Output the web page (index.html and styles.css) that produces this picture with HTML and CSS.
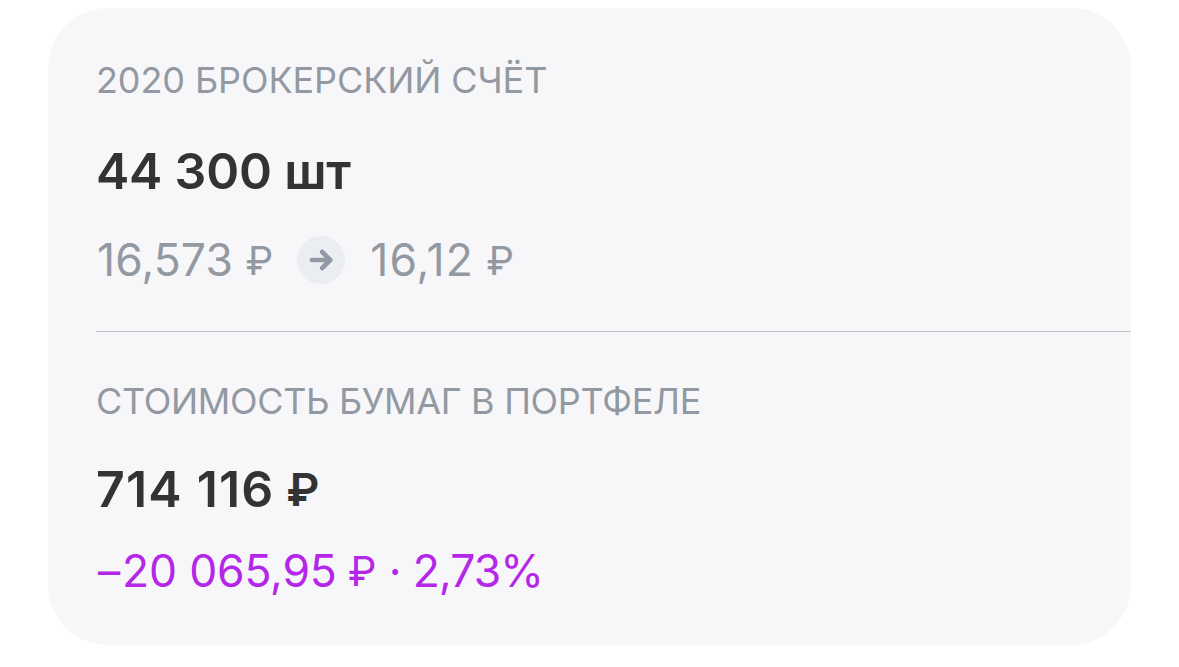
FILE: index.html
```html
<!doctype html>
<html lang="ru">
<head>
    <meta charset="UTF-8" />
    <title>Брокерский счёт</title>
    <link rel="stylesheet" href="styles.css">
</head>
<body>
    <div class="card">
        <div class="section account">
            <h3 class="label">2020 БРОКЕРСКИЙ СЧЁТ</h3>
            <p class="value">44 300 шт</p>
            <div class="prices">
                <span class="price">16,573 <span class="rub">₽</span></span>
                <svg class="arrow" viewBox="0 0 48 48">
                    <circle cx="24" cy="24" r="24" fill="#ebeef0"/>
                    <path d="M15 24H33M25.2 16L33.2 24L25.2 32" fill="none" stroke="#9299a4" stroke-width="4.6" stroke-linecap="round" stroke-linejoin="round"/>
                </svg>
                <span class="price current">16,12 <span class="rub">₽</span></span>
            </div>
        </div>
        <div class="section total">
            <h3 class="label total-label">СТОИМОСТЬ БУМАГ В ПОРТФЕЛЕ</h3>
            <p class="value total-value">714 116 <span class="rub">₽</span></p>
            <p class="change"><span class="minus">–</span>20 065,95 <span class="rub">₽</span> · <span class="percent">2,73%</span></p>
        </div>
    </div>
</body>
</html>
```

FILE: styles.css
```css
body {
    margin: 0;
    background: #fff;
    font-family: Inter, "Noto Sans", sans-serif;
}
.card {
    box-sizing: border-box;
    width: 1083px;
    height: 637px;
    margin: 8px 0 0 48px;
    padding-left: 48px;
    border-radius: 60px;
    background: #f7f7f9;
    overflow: hidden;
}
.section {
    box-sizing: border-box;
    white-space: nowrap;
}
.account {
    height: 324px;
    padding-top: 50px;
    border-bottom: 1px solid #c3c4c9;
}
.total {
    padding-top: 47px;
}
.label {
    margin: 0;
    font-size: 36px;
    line-height: 44px;
    font-weight: 400;
    letter-spacing: -0.1px;
    color: #9299a2;
}
.total-label {
    letter-spacing: -0.33px;
}
.value {
    margin: 39px 0 0;
    font-size: 50px;
    line-height: 60px;
    font-weight: 600;
    letter-spacing: -0.2px;
    color: #333335;
}
.total-value {
    height: 60px;
    margin-top: 36px;
    letter-spacing: 1.2px;
}
.rub {
    font-size: 0.91em;
    line-height: 1;
    letter-spacing: 0;
    vertical-align: 1px;
}
.total-value .rub {
    margin-left: -2px;
}
.prices {
    display: flex;
    align-items: center;
    margin-top: 31px;
    height: 56px;
    font-size: 44.5px;
    color: #9299a2;
}
.price {
    padding-left: 1px;
    letter-spacing: 0.1px;
}
.price .rub {
    font-size: 0.89em;
}
.current {
    letter-spacing: 1px;
}
.current .rub {
    margin-left: -1px;
}
.arrow {
    width: 48px;
    height: 48px;
    margin: 0 24px;
}
.change {
    margin: 24px 0 0;
    padding-left: 2px;
    font-size: 44.5px;
    line-height: 56px;
    letter-spacing: -0.2px;
    color: #b427e8;
}
.minus {
    margin-right: 2px;
}
.change .rub {
    margin-left: -1px;
}
.percent {
    margin-left: -1px;
    letter-spacing: -0.9px;
}
```
